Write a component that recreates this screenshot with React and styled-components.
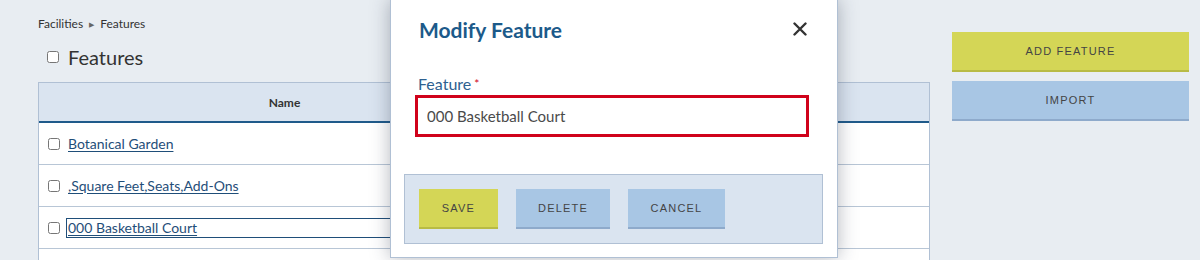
import React from "react";
import styled, { createGlobalStyle } from "styled-components";

const Global = createGlobalStyle`
  html, body { margin: 0; padding: 0; }
  body {
    background: #e8edf2;
    font-family: Lato, "Noto Sans", "Liberation Sans", sans-serif;
    color: #333;
    width: 1200px;
    height: 260px;
    overflow: hidden;
  }
`;

const Page = styled.div`
  position: relative;
  display: flex;
  width: 1200px;
  height: 260px;
  overflow: hidden;
  box-sizing: border-box;
  padding: 0 11px 0 38px;
  gap: 22px;
`;

const Main = styled.div`
  width: 892px;
  display: flex;
  flex-direction: column;
`;

const Breadcrumb = styled.div`
  margin-top: 16px;
  height: 16px;
  line-height: 16px;
  font-size: 12px;
  color: #333;
  display: flex;
  align-items: center;
  gap: 6px;
`;

const Crumb = styled.span``;

const Sep = styled.span`
  font-size: 7px;
  color: #666;
`;

const TitleRow = styled.div`
  margin-top: 13px;
  height: 24px;
  display: flex;
  align-items: center;
  padding-left: 9px;
  gap: 9px;
`;

const Check = styled.input.attrs({ type: "checkbox" })`
  margin: 0;
  width: 12px;
  height: 12px;
  flex: none;
`;

const Title = styled.h1`
  margin: 0;
  font-size: 20px;
  font-weight: 400;
  color: #333;
`;

const Table = styled.div`
  margin-top: 13px;
  border-left: 1px solid #b0c0d4;
  border-right: 1px solid #b0c0d4;
  background: #fff;
`;

const HeadRow = styled.div`
  display: grid;
  grid-template-columns: 491px 1fr;
  height: 38px;
  background: #dae4f0;
  border-top: 1px solid #b0c0d4;
  border-bottom: 2px solid #1f5a8a;
`;

const HeadCell = styled.div`
  display: flex;
  align-items: center;
  justify-content: center;
  font-size: 12px;
  font-weight: 700;
  color: #333;
`;

const Row = styled.div`
  display: grid;
  grid-template-columns: 491px 1fr;
  height: 41px;
  border-bottom: 1px solid #b8c6d6;
`;

const Cell = styled.div`
  display: flex;
  align-items: center;
  padding-left: 9px;
  gap: 8px;
`;

const Link = styled.a`
  font-size: 14px;
  color: #1f4e79;
  text-decoration: underline;
  text-underline-offset: 2px;
  cursor: pointer;
  line-height: 18px;
  ${(p) =>
    p.$focused &&
    `
    outline: 1px solid #1f4e79;
    outline-offset: 0;
    width: 440px;
    margin-left: -1px;
    padding-left: 1px;
  `}
`;

const Side = styled.div`
  width: 237px;
  display: flex;
  flex-direction: column;
  gap: 9px;
  padding-top: 32px;
`;

const Button = styled.button`
  height: 40px;
  box-sizing: border-box;
  border: none;
  border-bottom: 2px solid ${(p) => (p.$variant === "yellow" ? "#b8bb45" : "#8eaacb")};
  background: ${(p) => (p.$variant === "yellow" ? "#d4d656" : "#a8c6e4")};
  color: #444;
  font-family: "Liberation Sans", Arial, sans-serif;
  font-size: 11px;
  letter-spacing: 1.2px;
  text-transform: uppercase;
  padding: 0;
  width: ${(p) => (p.$w ? `${p.$w}px` : "100%")};
  cursor: pointer;
`;

const Modal = styled.div`
  position: absolute;
  left: 390px;
  top: -1px;
  width: 448px;
  box-sizing: border-box;
  background: #fff;
  border: 1px solid #b0c0d4;
  box-shadow: 0 0 18px rgba(40, 50, 70, 0.35);
  padding-bottom: 13px;
`;

const ModalHeader = styled.div`
  height: 58px;
  display: flex;
  align-items: center;
  justify-content: space-between;
  padding: 0 30px 0 28px;
`;

const ModalTitle = styled.h2`
  margin: 0;
  font-size: 21px;
  font-weight: 700;
  color: #1c5a8a;
`;

const Close = styled.button`
  border: none;
  background: none;
  padding: 0;
  width: 14px;
  height: 14px;
  display: flex;
  cursor: pointer;
`;

const Field = styled.div`
  padding: 15px 28px 0 24px;
  display: flex;
  flex-direction: column;
`;

const Label = styled.label`
  padding-left: 3px;
  font-size: 16px;
  line-height: 21px;
  color: #2e6190;
`;

const Req = styled.span`
  color: #d0021b;
  font-size: 12px;
  vertical-align: top;
  margin-left: 3px;
`;

const Input = styled.input`
  margin-top: 1px;
  height: 42px;
  box-sizing: border-box;
  border: 3px solid #d0021b;
  padding: 0 9px;
  font-family: Lato, "Noto Sans", sans-serif;
  font-size: 15px;
  color: #4a4a4a;
  outline: none;
`;

const Footer = styled.div`
  margin: 37px 14px 0 13px;
  background: #dae4f0;
  border: 1px solid #b0c0d4;
  padding: 14px;
  display: flex;
  gap: 18px;
`;

export default function App() {
  return (
    <>
      <Global />
      <Page>
        <Main>
          <Breadcrumb>
            <Crumb>Facilities</Crumb>
            <Sep>▶</Sep>
            <Crumb>Features</Crumb>
          </Breadcrumb>
          <TitleRow>
            <Check />
            <Title>Features</Title>
          </TitleRow>
          <Table>
            <HeadRow>
              <HeadCell>Name</HeadCell>
              <HeadCell />
            </HeadRow>
            {["Botanical Garden", ",Square Feet,Seats,Add-Ons", "000 Basketball Court", ""].map(
              (name, i) => (
                <Row key={i}>
                  <Cell>
                    {name && <Check />}
                    {name && <Link $focused={i === 2}>{name}</Link>}
                  </Cell>
                  <Cell />
                </Row>
              )
            )}
          </Table>
        </Main>
        <Side>
          <Button $variant="yellow">Add Feature</Button>
          <Button $variant="blue">Import</Button>
        </Side>
        <Modal>
          <ModalHeader>
            <ModalTitle>Modify Feature</ModalTitle>
            <Close aria-label="close">
              <svg width="14" height="14" viewBox="0 0 14 14">
                <path d="M1.5 1.5 L12.5 12.5 M12.5 1.5 L1.5 12.5" stroke="#333" strokeWidth="2.4" strokeLinecap="round" />
              </svg>
            </Close>
          </ModalHeader>
          <Field>
            <Label>
              Feature<Req>*</Req>
            </Label>
            <Input defaultValue="000 Basketball Court" />
          </Field>
          <Footer>
            <Button $variant="yellow" $w={79}>Save</Button>
            <Button $variant="blue" $w={94}>Delete</Button>
            <Button $variant="blue" $w={97}>Cancel</Button>
          </Footer>
        </Modal>
      </Page>
    </>
  );
}
